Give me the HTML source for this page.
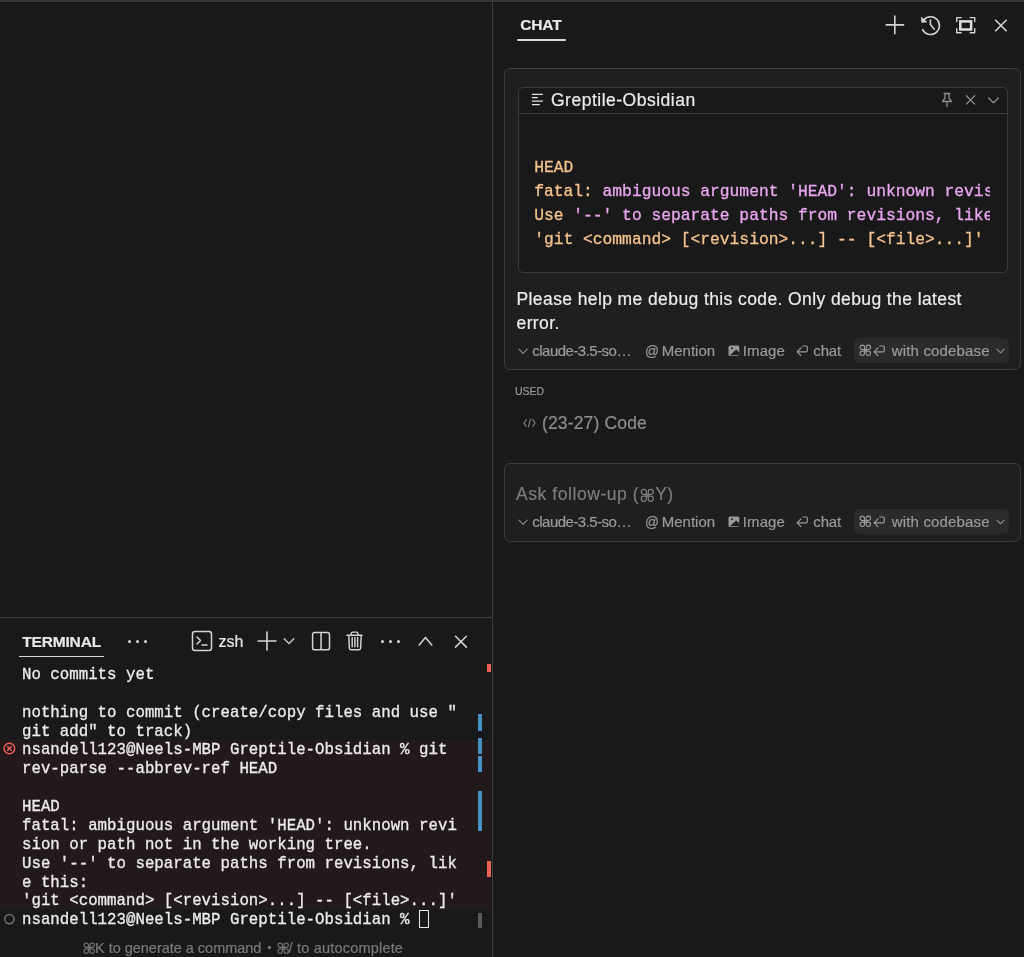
<!DOCTYPE html>
<html><head><meta charset="utf-8"><style>
html,body{margin:0;padding:0;width:1024px;height:957px;overflow:hidden;background:#191919;}
body{position:relative;font-family:"Liberation Sans",sans-serif;}
</style></head><body>
<div id="root" style="position:absolute;left:0;top:0;width:1024px;height:957px;will-change:transform;">
<div style="position:absolute;left:0px;top:0px;width:1024px;height:2px;background:#363636;"></div>
<div style="position:absolute;left:0px;top:2px;width:1024px;height:1px;background:#131313;"></div>
<div style="position:absolute;left:492px;top:0px;width:1px;height:957px;background:#3e3e3e;"></div>
<div style="position:absolute;left:0px;top:617px;width:492px;height:1px;background:#3e3e3e;"></div>
<div style="position:absolute;left:520.30px;top:16.98px;font:700 15.5px/15.5px 'Liberation Sans', sans-serif;color:#e8e8e8;letter-spacing:-0.2px;white-space:pre;-webkit-text-stroke:0.2px currentColor;">CHAT</div>
<div style="position:absolute;left:517px;top:39.3px;width:49px;height:1.5px;background:#dcdcdc;border-radius:1px"></div>
<svg style="position:absolute;left:885px;top:15px;" width="20" height="20" viewBox="0 0 20 20" fill="none"><path d="M9.8 0.6V19.2M0.6 9.9H19.2" stroke="#d4d4d4" stroke-width="1.6"/></svg>
<svg style="position:absolute;left:918px;top:13px;" width="24" height="24" viewBox="0 0 24 24" fill="none"><path d="M5.9 6.7A8.9 8.9 0 1 1 4.6 16.6" stroke="#d4d4d4" stroke-width="1.6" stroke-linecap="round"/><path d="M3.4 4.4L3.9 9.3L8.6 8.9Z" fill="#d4d4d4" stroke="#d4d4d4" stroke-width="0.9" stroke-linejoin="round"/><path d="M12.4 7.0V11.6L16.3 16.2" stroke="#d4d4d4" stroke-width="1.6" stroke-linecap="round" stroke-linejoin="round"/></svg>
<svg style="position:absolute;left:955px;top:16px;" width="22" height="19" viewBox="0 0 22 19" fill="none"><path d="M1.7 5.6V1.6H6.2M15.2 1.6H19.7V5.6M19.7 12.6V16.8H15.2M6.2 16.8H1.7V12.6" stroke="#d4d4d4" stroke-width="1.4" stroke-linecap="round" stroke-linejoin="round"/><rect x="5.3" y="5.4" width="10.8" height="8.1" stroke="#e0e0e0" stroke-width="2.5"/></svg>
<svg style="position:absolute;left:993px;top:18px;" width="16" height="15" viewBox="0 0 16 15" fill="none"><path d="M2.2 1.8L13.6 13.2M13.6 1.8L2.2 13.2" stroke="#d4d4d4" stroke-width="1.6" stroke-linecap="butt"/></svg>
<div style="position:absolute;left:504px;top:68px;width:517px;height:302px;background:#1f1f1f;box-sizing:border-box;border:1px solid #3c3c3c;border-radius:6px"></div>
<div style="position:absolute;left:518px;top:87px;width:490px;height:186px;background:#191919;box-sizing:border-box;border:1px solid #3a3a3a;border-radius:5px"></div>
<div style="position:absolute;left:519px;top:113px;width:488px;height:1px;background:#3a3a3a;"></div>
<svg style="position:absolute;left:530px;top:92px;" width="14" height="14" viewBox="0 0 14 14" fill="none"><path d="M1.9 2.3H12.8M1.9 5.7H7.8M1.9 9.1H12.8M1.9 12.5H9.8" stroke="#e4e4e4" stroke-width="1.25"/></svg>
<div style="position:absolute;left:551.00px;top:92.49px;font:400 17.5px/17.5px 'Liberation Sans', sans-serif;color:#ececec;letter-spacing:0.5px;white-space:pre;-webkit-text-stroke:0.2px currentColor;">Greptile-Obsidian</div>
<svg style="position:absolute;left:940px;top:92px;" width="14" height="16" viewBox="0 0 14 16" fill="none"><path d="M4 1.5H10M5 1.5V6L2.5 9.5H11.5L9 6V1.5M7 9.5V14.5" stroke="#8c8c8c" stroke-width="1.3" stroke-linejoin="round" stroke-linecap="round"/></svg>
<svg style="position:absolute;left:964px;top:94px;" width="13" height="12" viewBox="0 0 13 12" fill="none"><path d="M2.4 1.7L10.7 10.1M10.7 1.7L2.4 10.1" stroke="#8c8c8c" stroke-width="1.3" stroke-linecap="round"/></svg>
<svg style="position:absolute;left:986px;top:95px;" width="15" height="10" viewBox="0 0 15 10" fill="none"><path d="M2.6 3.0L7.5 7.7L12.4 3.0" stroke="#8c8c8c" stroke-width="1.3" stroke-linecap="round" stroke-linejoin="round"/></svg>
<div style="position:absolute;left:0;top:0;width:989.6px;height:957px;overflow:hidden"><div style="position:absolute;left:534.20px;top:159.52px;font:400 16.29px/16.29px 'Liberation Mono', monospace;color:#ccc;letter-spacing:0px;white-space:pre;-webkit-text-stroke:0.3px currentColor;"><span style="color:#f5c38e">HEAD</span></div>
<div style="position:absolute;left:534.20px;top:183.52px;font:400 16.29px/16.29px 'Liberation Mono', monospace;color:#ccc;letter-spacing:0px;white-space:pre;-webkit-text-stroke:0.3px currentColor;"><span style="color:#f5c38e">fatal:</span><span style="color:#eaa7ef"> ambiguous argument 'HEAD': unknown revision or path not in the working tree.</span></div>
<div style="position:absolute;left:534.20px;top:207.52px;font:400 16.29px/16.29px 'Liberation Mono', monospace;color:#ccc;letter-spacing:0px;white-space:pre;-webkit-text-stroke:0.3px currentColor;"><span style="color:#f5c38e">Use</span><span style="color:#eaa7ef"> '--' to separate paths from revisions, like this:</span></div>
<div style="position:absolute;left:534.20px;top:231.52px;font:400 16.29px/16.29px 'Liberation Mono', monospace;color:#ccc;letter-spacing:0px;white-space:pre;-webkit-text-stroke:0.3px currentColor;"><span style="color:#f5c38e">'git &lt;command&gt; [&lt;revision&gt;...] -- [&lt;file&gt;...]'</span></div>
</div>
<div style="position:absolute;left:516.50px;top:291.19px;font:400 17.5px/17.5px 'Liberation Sans', sans-serif;color:#ececec;letter-spacing:0.4px;white-space:pre;-webkit-text-stroke:0.2px currentColor;">Please help me debug this code. Only debug the latest</div>
<div style="position:absolute;left:516.50px;top:315.39px;font:400 17.5px/17.5px 'Liberation Sans', sans-serif;color:#ececec;letter-spacing:0.4px;white-space:pre;-webkit-text-stroke:0.2px currentColor;">error.</div>
<svg style="position:absolute;left:517.5px;top:347.8px;" width="11" height="7" viewBox="0 0 11 7" fill="none"><path d="M1.0 1.2L5.1 5.4L9.2 1.2" stroke="#8c8c8c" stroke-width="1.1" stroke-linecap="round" stroke-linejoin="round"/></svg>
<div style="position:absolute;left:532.30px;top:343.30px;font:400 15px/15px 'Liberation Sans', sans-serif;color:#9a9a9a;letter-spacing:-0.52px;white-space:pre;-webkit-text-stroke:0.2px currentColor;">claude-3.5-so…</div>
<div style="position:absolute;left:645.00px;top:344.62px;font:400 13.8px/13.8px 'Liberation Sans', sans-serif;color:#9a9a9a;letter-spacing:0px;white-space:pre;-webkit-text-stroke:0.2px currentColor;">@</div>
<div style="position:absolute;left:661.80px;top:343.30px;font:400 15px/15px 'Liberation Sans', sans-serif;color:#9a9a9a;letter-spacing:-0.02px;white-space:pre;-webkit-text-stroke:0.2px currentColor;">Mention</div>
<svg style="position:absolute;left:727.5px;top:345.3px;" width="12" height="12" viewBox="0 0 12 12" fill="none"><rect x="0.5" y="0.5" width="10.8" height="10.4" rx="1.6" fill="#9a9a9a"/><path d="M1.9 10.3L8.2 4.6L11.3 7.4V10.3Z" fill="#1f1f1f"/><circle cx="4.0" cy="3.3" r="0.95" fill="#1f1f1f"/></svg>
<div style="position:absolute;left:742.80px;top:343.30px;font:400 15px/15px 'Liberation Sans', sans-serif;color:#9a9a9a;letter-spacing:0.1px;white-space:pre;-webkit-text-stroke:0.2px currentColor;">Image</div>
<svg style="position:absolute;left:795.9000000000001px;top:345.09999999999997px;" width="13" height="12" viewBox="0 0 13 12" fill="none"><path d="M6.8 1.0H10.2A1.1 1.1 0 0 1 11.3 2.1V5.7A1.1 1.1 0 0 1 10.2 6.8H1.2M4.9 3.0L1.1 6.8L4.9 10.6" stroke="#9a9a9a" stroke-width="1.2" stroke-linecap="round" stroke-linejoin="round"/></svg>
<div style="position:absolute;left:813.30px;top:343.30px;font:400 15px/15px 'Liberation Sans', sans-serif;color:#9a9a9a;letter-spacing:-0.15px;white-space:pre;-webkit-text-stroke:0.2px currentColor;">chat</div>
<div style="position:absolute;left:854px;top:338px;width:155px;height:25px;background:#2b2b2b;border-radius:5px"></div>
<svg style="position:absolute;left:859.3499999999999px;top:344.34999999999997px;" width="12.600000000000001" height="12.600000000000001" viewBox="0 0 12.600000000000001 12.600000000000001" fill="none"><path d="M5.47 5.47H7.13V7.13H5.47ZM5.47 5.47V3.28A2.18 2.18 0 1 0 3.28 5.47H5.47M7.13 5.47V3.28A2.18 2.18 0 1 1 9.32 5.47H7.13M7.13 7.13V9.32A2.18 2.18 0 1 0 9.32 7.13H7.13M5.47 7.13V9.32A2.18 2.18 0 1 1 3.28 7.13H5.47" stroke="#9a9a9a" stroke-width="1.1"/></svg>
<svg style="position:absolute;left:873.1px;top:345.0px;" width="13" height="12" viewBox="0 0 13 12" fill="none"><path d="M6.8 1.0H10.2A1.1 1.1 0 0 1 11.3 2.1V5.7A1.1 1.1 0 0 1 10.2 6.8H1.2M4.9 3.0L1.1 6.8L4.9 10.6" stroke="#9a9a9a" stroke-width="1.2" stroke-linecap="round" stroke-linejoin="round"/></svg>
<div style="position:absolute;left:891.80px;top:343.30px;font:400 15px/15px 'Liberation Sans', sans-serif;color:#9a9a9a;letter-spacing:0.16px;white-space:pre;-webkit-text-stroke:0.2px currentColor;">with codebase</div>
<svg style="position:absolute;left:996.2px;top:347.8px;" width="10" height="7" viewBox="0 0 10 7" fill="none"><path d="M1.0 1.2L4.6 4.9L8.2 1.2" stroke="#8c8c8c" stroke-width="1.1" stroke-linecap="round" stroke-linejoin="round"/></svg>
<div style="position:absolute;left:515.00px;top:386.01px;font:400 10.5px/10.5px 'Liberation Sans', sans-serif;color:#9a9a9a;letter-spacing:0px;white-space:pre;-webkit-text-stroke:0.2px currentColor;">USED</div>
<svg style="position:absolute;left:522px;top:417px;" width="15" height="12" viewBox="0 0 15 12" fill="none"><path d="M4.3 2.6L1.9 6.0L4.3 9.4M10.7 2.6L13.1 6.0L10.7 9.4M8.4 2.1L6.6 9.9" stroke="#8a8a8a" stroke-width="1.05" stroke-linecap="round" stroke-linejoin="round"/></svg>
<div style="position:absolute;left:542.00px;top:415.29px;font:400 17.5px/17.5px 'Liberation Sans', sans-serif;color:#8e8e8e;letter-spacing:0.15px;white-space:pre;-webkit-text-stroke:0.2px currentColor;">(23-27) Code</div>
<div style="position:absolute;left:504px;top:463px;width:517px;height:79px;background:#1f1f1f;box-sizing:border-box;border:1px solid #3c3c3c;border-radius:6px"></div>
<div style="position:absolute;left:516.00px;top:486.19px;font:400 17.5px/17.5px 'Liberation Sans', sans-serif;color:#7c7c7c;letter-spacing:0.56px;white-space:pre;-webkit-text-stroke:0.2px currentColor;">Ask follow-up (</div>
<svg style="position:absolute;left:640.375px;top:487.575px;" width="14.5" height="14.5" viewBox="0 0 14.5 14.5" fill="none"><path d="M6.29 6.29H8.21V8.21H6.29ZM6.29 6.29V3.77A2.52 2.52 0 1 0 3.77 6.29H6.29M8.21 6.29V3.77A2.52 2.52 0 1 1 10.73 6.29H8.21M8.21 8.21V10.73A2.52 2.52 0 1 0 10.73 8.21H8.21M6.29 8.21V10.73A2.52 2.52 0 1 1 3.77 8.21H6.29" stroke="#7c7c7c" stroke-width="1.25"/></svg>
<div style="position:absolute;left:655.30px;top:486.19px;font:400 17.5px/17.5px 'Liberation Sans', sans-serif;color:#7c7c7c;letter-spacing:0.4px;white-space:pre;-webkit-text-stroke:0.2px currentColor;">Y)</div>
<svg style="position:absolute;left:517.5px;top:518.85px;" width="11" height="7" viewBox="0 0 11 7" fill="none"><path d="M1.0 1.2L5.1 5.4L9.2 1.2" stroke="#8c8c8c" stroke-width="1.1" stroke-linecap="round" stroke-linejoin="round"/></svg>
<div style="position:absolute;left:532.30px;top:514.35px;font:400 15px/15px 'Liberation Sans', sans-serif;color:#9a9a9a;letter-spacing:-0.52px;white-space:pre;-webkit-text-stroke:0.2px currentColor;">claude-3.5-so…</div>
<div style="position:absolute;left:645.00px;top:515.67px;font:400 13.8px/13.8px 'Liberation Sans', sans-serif;color:#9a9a9a;letter-spacing:0px;white-space:pre;-webkit-text-stroke:0.2px currentColor;">@</div>
<div style="position:absolute;left:661.80px;top:514.35px;font:400 15px/15px 'Liberation Sans', sans-serif;color:#9a9a9a;letter-spacing:-0.02px;white-space:pre;-webkit-text-stroke:0.2px currentColor;">Mention</div>
<svg style="position:absolute;left:727.5px;top:516.35px;" width="12" height="12" viewBox="0 0 12 12" fill="none"><rect x="0.5" y="0.5" width="10.8" height="10.4" rx="1.6" fill="#9a9a9a"/><path d="M1.9 10.3L8.2 4.6L11.3 7.4V10.3Z" fill="#1f1f1f"/><circle cx="4.0" cy="3.3" r="0.95" fill="#1f1f1f"/></svg>
<div style="position:absolute;left:742.80px;top:514.35px;font:400 15px/15px 'Liberation Sans', sans-serif;color:#9a9a9a;letter-spacing:0.1px;white-space:pre;-webkit-text-stroke:0.2px currentColor;">Image</div>
<svg style="position:absolute;left:795.9000000000001px;top:516.1500000000001px;" width="13" height="12" viewBox="0 0 13 12" fill="none"><path d="M6.8 1.0H10.2A1.1 1.1 0 0 1 11.3 2.1V5.7A1.1 1.1 0 0 1 10.2 6.8H1.2M4.9 3.0L1.1 6.8L4.9 10.6" stroke="#9a9a9a" stroke-width="1.2" stroke-linecap="round" stroke-linejoin="round"/></svg>
<div style="position:absolute;left:813.30px;top:514.35px;font:400 15px/15px 'Liberation Sans', sans-serif;color:#9a9a9a;letter-spacing:-0.15px;white-space:pre;-webkit-text-stroke:0.2px currentColor;">chat</div>
<div style="position:absolute;left:854px;top:509.05px;width:155px;height:25px;background:#2b2b2b;border-radius:5px"></div>
<svg style="position:absolute;left:859.3499999999999px;top:515.4px;" width="12.600000000000001" height="12.600000000000001" viewBox="0 0 12.600000000000001 12.600000000000001" fill="none"><path d="M5.47 5.47H7.13V7.13H5.47ZM5.47 5.47V3.28A2.18 2.18 0 1 0 3.28 5.47H5.47M7.13 5.47V3.28A2.18 2.18 0 1 1 9.32 5.47H7.13M7.13 7.13V9.32A2.18 2.18 0 1 0 9.32 7.13H7.13M5.47 7.13V9.32A2.18 2.18 0 1 1 3.28 7.13H5.47" stroke="#9a9a9a" stroke-width="1.1"/></svg>
<svg style="position:absolute;left:873.1px;top:516.0500000000001px;" width="13" height="12" viewBox="0 0 13 12" fill="none"><path d="M6.8 1.0H10.2A1.1 1.1 0 0 1 11.3 2.1V5.7A1.1 1.1 0 0 1 10.2 6.8H1.2M4.9 3.0L1.1 6.8L4.9 10.6" stroke="#9a9a9a" stroke-width="1.2" stroke-linecap="round" stroke-linejoin="round"/></svg>
<div style="position:absolute;left:891.80px;top:514.35px;font:400 15px/15px 'Liberation Sans', sans-serif;color:#9a9a9a;letter-spacing:0.16px;white-space:pre;-webkit-text-stroke:0.2px currentColor;">with codebase</div>
<svg style="position:absolute;left:996.2px;top:518.85px;" width="10" height="7" viewBox="0 0 10 7" fill="none"><path d="M1.0 1.2L4.6 4.9L8.2 1.2" stroke="#8c8c8c" stroke-width="1.1" stroke-linecap="round" stroke-linejoin="round"/></svg>
<div style="position:absolute;left:22.30px;top:634.08px;font:700 15.5px/15.5px 'Liberation Sans', sans-serif;color:#e8e8e8;letter-spacing:-0.18px;white-space:pre;-webkit-text-stroke:0.2px currentColor;">TERMINAL</div>
<div style="position:absolute;left:19px;top:655.6px;width:85px;height:1.6px;background:#d8d8d8;"></div>
<div style="position:absolute;left:128.10000000000002px;top:639.6px;width:3.2px;height:3.2px;background:#d8d8d8;border-radius:50%"></div>
<div style="position:absolute;left:136.20000000000002px;top:639.6px;width:3.2px;height:3.2px;background:#d8d8d8;border-radius:50%"></div>
<div style="position:absolute;left:144.3px;top:639.6px;width:3.2px;height:3.2px;background:#d8d8d8;border-radius:50%"></div>
<svg style="position:absolute;left:191px;top:630px;" width="22" height="22" viewBox="0 0 22 22" fill="none"><rect x="1.5" y="1.5" width="19" height="19" rx="2.5" stroke="#d4d4d4" stroke-width="1.5"/><path d="M6 7L9.5 10.5L6 14M11 15H16" stroke="#d4d4d4" stroke-width="1.5" stroke-linecap="round" stroke-linejoin="round"/></svg>
<div style="position:absolute;left:218.50px;top:633.76px;font:400 16px/16px 'Liberation Sans', sans-serif;color:#e6e6e6;letter-spacing:0px;white-space:pre;-webkit-text-stroke:0.2px currentColor;">zsh</div>
<svg style="position:absolute;left:257px;top:631px;" width="20" height="20" viewBox="0 0 20 20" fill="none"><path d="M10 1V19M1 10H19" stroke="#d4d4d4" stroke-width="1.6" stroke-linecap="round"/></svg>
<svg style="position:absolute;left:283px;top:637px;" width="12" height="9" viewBox="0 0 12 9" fill="none"><path d="M1.2 1.8L6 6.6L10.8 1.8" stroke="#d4d4d4" stroke-width="1.3" stroke-linecap="round" stroke-linejoin="round"/></svg>
<svg style="position:absolute;left:311px;top:631px;" width="20" height="21" viewBox="0 0 20 21" fill="none"><rect x="1.6" y="1.45" width="16.9" height="17.4" rx="2.2" stroke="#d4d4d4" stroke-width="1.5"/><path d="M10.05 1.45V18.85" stroke="#d4d4d4" stroke-width="1.5"/></svg>
<svg style="position:absolute;left:345px;top:629px;" width="19" height="22" viewBox="0 0 19 22" fill="none"><path d="M1.9 6.2H17.1M6.3 6.2V4.7A1.6 1.6 0 0 1 7.9 3.1H11.4A1.6 1.6 0 0 1 13 4.7V6.2M3.8 6.2L4.3 19.1A1.6 1.6 0 0 0 5.9 20.7H14.0A1.6 1.6 0 0 0 15.6 19.1L16.2 6.2M7.2 8.4V17.7M9.9 8.4V17.7M12.6 8.4V17.7" stroke="#d4d4d4" stroke-width="1.45" stroke-linejoin="round" stroke-linecap="round"/></svg>
<div style="position:absolute;left:381.1px;top:640.2px;width:3.2px;height:3.2px;background:#d8d8d8;border-radius:50%"></div>
<div style="position:absolute;left:389.2px;top:640.2px;width:3.2px;height:3.2px;background:#d8d8d8;border-radius:50%"></div>
<div style="position:absolute;left:397.3px;top:640.2px;width:3.2px;height:3.2px;background:#d8d8d8;border-radius:50%"></div>
<svg style="position:absolute;left:417px;top:635px;" width="17" height="12" viewBox="0 0 17 12" fill="none"><path d="M2.2 9.9L8.5 2.6L14.8 9.9" stroke="#d4d4d4" stroke-width="1.5" stroke-linecap="round" stroke-linejoin="round"/></svg>
<svg style="position:absolute;left:453px;top:634px;" width="15" height="15" viewBox="0 0 15 15" fill="none"><path d="M2.5 2.3L13.4 13.1M13.4 2.3L2.5 13.1" stroke="#d4d4d4" stroke-width="1.5" stroke-linecap="round"/></svg>
<div style="position:absolute;left:0px;top:739px;width:491px;height:171px;background:#221a1a;"></div>
<div style="position:absolute;left:487px;top:663.8px;width:4px;height:8.3px;background:#ec605a;"></div>
<div style="position:absolute;left:478px;top:714.4px;width:4px;height:16.4px;background:#4790c4;"></div>
<div style="position:absolute;left:478px;top:738px;width:4px;height:15.5px;background:#4790c4;"></div>
<div style="position:absolute;left:478px;top:756px;width:4px;height:15.5px;background:#4790c4;"></div>
<div style="position:absolute;left:478px;top:791px;width:4px;height:39.5px;background:#4790c4;"></div>
<div style="position:absolute;left:487px;top:861px;width:4px;height:16px;background:#ec605a;"></div>
<div style="position:absolute;left:478px;top:913px;width:4px;height:15px;background:#5a5a5a;"></div>
<div style="position:absolute;left:22.00px;top:665.94px;font:400 17.2px/17.2px 'Liberation Mono', monospace;color:#efebeb;letter-spacing:0px;white-space:pre;-webkit-text-stroke:0.32px currentColor;transform:scaleX(0.9165);transform-origin:0 0;">No commits yet</div>
<div style="position:absolute;left:22.00px;top:703.68px;font:400 17.2px/17.2px 'Liberation Mono', monospace;color:#efebeb;letter-spacing:0px;white-space:pre;-webkit-text-stroke:0.32px currentColor;transform:scaleX(0.9165);transform-origin:0 0;">nothing to commit (create/copy files and use "</div>
<div style="position:absolute;left:22.00px;top:722.55px;font:400 17.2px/17.2px 'Liberation Mono', monospace;color:#efebeb;letter-spacing:0px;white-space:pre;-webkit-text-stroke:0.32px currentColor;transform:scaleX(0.9165);transform-origin:0 0;">git add" to track)</div>
<div style="position:absolute;left:22.00px;top:741.42px;font:400 17.2px/17.2px 'Liberation Mono', monospace;color:#efebeb;letter-spacing:0px;white-space:pre;-webkit-text-stroke:0.32px currentColor;transform:scaleX(0.9165);transform-origin:0 0;">nsandell123@Neels-MBP Greptile-Obsidian % git</div>
<div style="position:absolute;left:22.00px;top:760.29px;font:400 17.2px/17.2px 'Liberation Mono', monospace;color:#efebeb;letter-spacing:0px;white-space:pre;-webkit-text-stroke:0.32px currentColor;transform:scaleX(0.9165);transform-origin:0 0;">rev-parse --abbrev-ref HEAD</div>
<div style="position:absolute;left:22.00px;top:798.03px;font:400 17.2px/17.2px 'Liberation Mono', monospace;color:#efebeb;letter-spacing:0px;white-space:pre;-webkit-text-stroke:0.32px currentColor;transform:scaleX(0.9165);transform-origin:0 0;">HEAD</div>
<div style="position:absolute;left:22.00px;top:816.90px;font:400 17.2px/17.2px 'Liberation Mono', monospace;color:#efebeb;letter-spacing:0px;white-space:pre;-webkit-text-stroke:0.32px currentColor;transform:scaleX(0.9165);transform-origin:0 0;">fatal: ambiguous argument 'HEAD': unknown revi</div>
<div style="position:absolute;left:22.00px;top:835.77px;font:400 17.2px/17.2px 'Liberation Mono', monospace;color:#efebeb;letter-spacing:0px;white-space:pre;-webkit-text-stroke:0.32px currentColor;transform:scaleX(0.9165);transform-origin:0 0;">sion or path not in the working tree.</div>
<div style="position:absolute;left:22.00px;top:854.64px;font:400 17.2px/17.2px 'Liberation Mono', monospace;color:#efebeb;letter-spacing:0px;white-space:pre;-webkit-text-stroke:0.32px currentColor;transform:scaleX(0.9165);transform-origin:0 0;">Use '--' to separate paths from revisions, lik</div>
<div style="position:absolute;left:22.00px;top:873.51px;font:400 17.2px/17.2px 'Liberation Mono', monospace;color:#efebeb;letter-spacing:0px;white-space:pre;-webkit-text-stroke:0.32px currentColor;transform:scaleX(0.9165);transform-origin:0 0;">e this:</div>
<div style="position:absolute;left:22.00px;top:892.38px;font:400 17.2px/17.2px 'Liberation Mono', monospace;color:#efebeb;letter-spacing:0px;white-space:pre;-webkit-text-stroke:0.32px currentColor;transform:scaleX(0.9165);transform-origin:0 0;">'git &lt;command&gt; [&lt;revision&gt;...] -- [&lt;file&gt;...]'</div>
<div style="position:absolute;left:22.00px;top:911.25px;font:400 17.2px/17.2px 'Liberation Mono', monospace;color:#efebeb;letter-spacing:0px;white-space:pre;-webkit-text-stroke:0.32px currentColor;transform:scaleX(0.9165);transform-origin:0 0;">nsandell123@Neels-MBP Greptile-Obsidian % </div>
<div style="position:absolute;left:419.2px;top:909.8299999999999px;width:9.4px;height:18.5px;background:transparent;box-sizing:border-box;border:1.3px solid #e8e8e8"></div>
<svg style="position:absolute;left:3px;top:742px;" width="14" height="14" viewBox="0 0 14 14" fill="none"><circle cx="6.4" cy="6.5" r="5.3" stroke="#ee5f58" stroke-width="1.4"/><path d="M4.2 4.3L8.6 8.7M8.6 4.3L4.2 8.7" stroke="#ee5f58" stroke-width="1.6" stroke-linecap="butt"/></svg>
<svg style="position:absolute;left:3px;top:912px;" width="14" height="14" viewBox="0 0 14 14" fill="none"><circle cx="6.4" cy="7.1" r="4.6" stroke="#6e6e6e" stroke-width="1.6"/></svg>
<div style="position:absolute;left:95.00px;top:941.03px;font:400 14.5px/14.5px 'Liberation Sans', sans-serif;color:#7a7a7a;letter-spacing:-0.02px;white-space:pre;-webkit-text-stroke:0.2px currentColor;">K to generate a command</div>
<div style="position:absolute;left:268.4px;top:946.2px;width:2.6px;height:2.6px;background:#7a7a7a;border-radius:50%"></div>
<div style="position:absolute;left:288.50px;top:941.03px;font:400 14.5px/14.5px 'Liberation Sans', sans-serif;color:#7a7a7a;letter-spacing:0.2px;white-space:pre;-webkit-text-stroke:0.2px currentColor;">/ to autocomplete</div>
<svg style="position:absolute;left:82.775px;top:942.075px;" width="12.4" height="12.4" viewBox="0 0 12.4 12.4" fill="none"><path d="M5.38 5.38H7.02V7.02H5.38ZM5.38 5.38V3.21A2.16 2.16 0 1 0 3.21 5.38H5.38M7.02 5.38V3.21A2.16 2.16 0 1 1 9.19 5.38H7.02M7.02 7.02V9.19A2.16 2.16 0 1 0 9.19 7.02H7.02M5.38 7.02V9.19A2.16 2.16 0 1 1 3.21 7.02H5.38" stroke="#7a7a7a" stroke-width="1.05"/></svg>
<svg style="position:absolute;left:277.37499999999994px;top:942.075px;" width="12.4" height="12.4" viewBox="0 0 12.4 12.4" fill="none"><path d="M5.38 5.38H7.02V7.02H5.38ZM5.38 5.38V3.21A2.16 2.16 0 1 0 3.21 5.38H5.38M7.02 5.38V3.21A2.16 2.16 0 1 1 9.19 5.38H7.02M7.02 7.02V9.19A2.16 2.16 0 1 0 9.19 7.02H7.02M5.38 7.02V9.19A2.16 2.16 0 1 1 3.21 7.02H5.38" stroke="#7a7a7a" stroke-width="1.05"/></svg>
</div></body></html>
